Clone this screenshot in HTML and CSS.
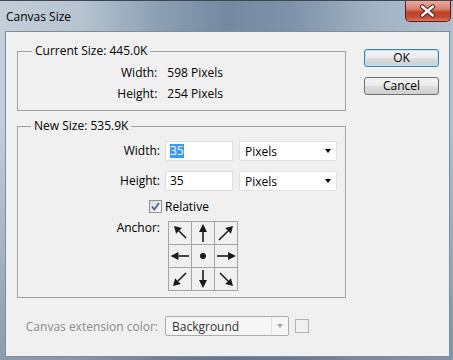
FILE: index.html
```html
<!DOCTYPE html>
<html>
<head>
<meta charset="utf-8">
<link rel="stylesheet" href="styles.css">
</head>
<body>
<div class="window">
  <div class="titlebar">
    <span class="title">Canvas Size</span>
    <div class="close">
      <svg width="46" height="21" viewBox="0 0 46 21">
        <path d="M17.5 6.5 L28.5 15.5 M28.5 6.5 L17.5 15.5" stroke="#4a1c14" stroke-width="4.6" stroke-linecap="round" fill="none"/>
        <path d="M17.5 6.5 L28.5 15.5 M28.5 6.5 L17.5 15.5" stroke="#ffffff" stroke-width="2.6" stroke-linecap="round" fill="none"/>
      </svg>
    </div>
  </div>
  <div class="client">
    <div class="main">
      <fieldset class="group current">
        <legend>Current Size: 445.0K</legend>
        <div class="info">
          <div class="info-row"><span>Width:</span><span class="val">598 Pixels</span></div>
          <div class="info-row"><span>Height:</span><span class="val">254 Pixels</span></div>
        </div>
      </fieldset>
      <fieldset class="group newsize">
        <legend>New Size: 535.9K</legend>
        <div class="form">
          <span class="lbl">Width:</span>
          <div class="input"><span class="selected">35</span></div>
          <div class="select"><span>Pixels</span><span class="caret"></span></div>

          <span class="lbl">Height:</span>
          <div class="input"><span>35</span></div>
          <div class="select"><span>Pixels</span><span class="caret"></span></div>

          <span class="checkbox">
            <svg width="13" height="13" viewBox="0 0 13 13">
              <path d="M3 6.5 L5.3 9.5 L10 3" stroke="#4b5f95" stroke-width="1.8" fill="none"/>
            </svg>
          </span>
          <span class="check-label">Relative</span>

          <span class="lbl anchor-lbl">Anchor:</span>
          <div class="anchor">
            <div class="cell"><svg viewBox="0 0 22 22"><line x1="17" y1="16" x2="10" y2="9"/><polygon points="5,4 12.8,6.1 7.1,11.8"/></svg></div>
            <div class="cell"><svg viewBox="0 0 22 22"><line x1="11" y1="20" x2="11" y2="10"/><polygon points="11,2 15,10 7,10"/></svg></div>
            <div class="cell"><svg viewBox="0 0 22 22"><line x1="4" y1="18" x2="13" y2="9"/><polygon points="18,4 15.9,11.8 10.2,6.1"/></svg></div>
            <div class="cell"><svg viewBox="0 0 22 22"><line x1="20" y1="11" x2="9.5" y2="11"/><polygon points="1.5,11 9.5,7 9.5,15"/></svg></div>
            <div class="cell"><svg viewBox="0 0 22 22"><circle cx="11" cy="11" r="3"/></svg></div>
            <div class="cell"><svg viewBox="0 0 22 22"><line x1="2" y1="11" x2="13" y2="11"/><polygon points="21,11 13,7 13,15"/></svg></div>
            <div class="cell"><svg viewBox="0 0 22 22"><line x1="17" y1="5" x2="9" y2="13"/><polygon points="4,18 11.8,15.9 6.1,10.2"/></svg></div>
            <div class="cell"><svg viewBox="0 0 22 22"><line x1="11" y1="2" x2="11" y2="12"/><polygon points="11,20 15,12 7,12"/></svg></div>
            <div class="cell"><svg viewBox="0 0 22 22"><line x1="5" y1="5" x2="13" y2="13"/><polygon points="18,18 15.9,10.2 10.2,15.9"/></svg></div>
          </div>
        </div>
      </fieldset>
      <div class="ext">
        <span class="ext-lbl">Canvas extension color:</span>
        <div class="ext-select"><span class="ext-text">Background</span><span class="ext-btn"><span class="ext-caret"></span></span></div>
        <span class="swatch"></span>
      </div>
    </div>
    <div class="buttons">
      <button class="btn ok">OK</button>
      <button class="btn">Cancel</button>
    </div>
  </div>
</div>
</body>
</html>
```

FILE: styles.css
```css
* { box-sizing: border-box; }
html, body { margin: 0; padding: 0; }
body {
  width: 453px;
  height: 360px;
  overflow: hidden;
  font-family: "Open Sans", "Noto Sans", sans-serif;
  font-size: 12px;
  color: #000;
}
.window {
  width: 453px;
  height: 360px;
  display: flex;
  flex-direction: column;
  border-top: 1px solid #3e464f;
  background:
    linear-gradient(180deg, rgba(0,0,0,0) 0, rgba(0,0,0,0) 35%, rgba(70,95,120,0.45) 100%),
    linear-gradient(90deg, #c3ced9 0%, #b6c3d0 18%, #8c9fb3 35%, #7489a1 50%, #7f93aa 65%, #a2b2c3 82%, #b0bfcd 100%);
}
.titlebar {
  height: 30px;
  display: flex;
  justify-content: space-between;
  align-items: flex-start;
  flex: none;
}
.title {
  font-size: 12px;
  line-height: 16px;
  padding: 8px 0 0 6px;
  color: #000;
}
.close {
  width: 46px;
  height: 21px;
  margin-right: 2px;
  border: 1px solid #5a2017;
  border-top: none;
  border-radius: 0 0 5px 5px;
  background: linear-gradient(180deg, #e9aa9c 0%, #d98270 40%, #c2422b 55%, #c54a32 80%, #d9775f 100%);
  display: flex;
}
.close svg { display: block; margin: -1px 0 0 -1px; }
.client {
  flex: 1;
  margin: 0 3px 3px 5px;
  border: 1px solid #7d8c9b;
  background: #f0f0f0;
  display: flex;
  align-items: flex-start;
}
.main {
  padding: 12px 0 0 11px;
  width: 340px;
  flex: none;
}
.group {
  margin: 0;
  padding: 0;
  border: 1px solid #a0a0a0;
  width: 329px;
  min-width: 0;
}
.group legend {
  padding: 0 3px;
  margin-left: 14px;
  line-height: 14px;
}
.newsize { margin-top: 8px; }
.newsize legend { margin-left: 13px; }
.info {
  padding: 8px 0 9px 0;
  width: 205px;
  display: flex;
  flex-direction: column;
  gap: 7px;
}
.info-row {
  display: flex;
  justify-content: flex-end;
  line-height: 14px;
}
.info-row .val { margin-left: 10px; }
.form {
  display: grid;
  grid-template-columns: 147px 74px 98px;
  grid-template-rows: 30px 29px 21px 70px;
  padding: 8px 0 6px 0;
}
.lbl {
  padding-right: 5px;
  text-align: right;
  line-height: 20px;
  align-self: start;
}
.input {
  width: 68px;
  height: 20px;
  background: #fff;
  border: 1px solid #dedede;
  padding: 0 0 0 4px;
  display: flex;
  align-items: center;
  line-height: 14px;
}
.selected {
  background: #3399ff;
  color: #fff;
}
.select {
  width: 98px;
  height: 20px;
  background: #fff;
  border: 1px solid #e2e2e2;
  border-radius: 2px;
  padding: 0 0 0 5px;
  display: flex;
  align-items: center;
  justify-content: space-between;
}
.caret {
  width: 0;
  height: 0;
  border-left: 3.5px solid transparent;
  border-right: 3.5px solid transparent;
  border-top: 4px solid #000;
  margin-right: 5px;
}
.checkbox {
  justify-self: end;
  margin-right: 3px;
  width: 13px;
  height: 13px;
  border: 1px solid #8e8f8f;
  background: linear-gradient(135deg, #dcdcdc, #fbfbfb);
  display: flex;
  align-items: center;
  justify-content: center;
  align-self: start;
}
.checkbox svg { display: block; margin: -1px; }
.check-label {
  grid-column: 2 / 4;
  line-height: 13px;
  align-self: start;
}
.anchor-lbl { line-height: 14px; }
.anchor {
  margin-left: 3px;
  width: 70px;
  height: 70px;
  display: grid;
  grid-template-columns: repeat(3, 23px);
  grid-template-rows: repeat(3, 23px);
  border-top: 1px solid #a4a4a4;
  border-left: 1px solid #a4a4a4;
  grid-column: 2 / 4;
}
.cell {
  border-right: 1px solid #a4a4a4;
  border-bottom: 1px solid #a4a4a4;
}
.cell svg {
  display: block;
  width: 22px;
  height: 22px;
}
.cell line { stroke: #1a1a1a; stroke-width: 1.6; }
.cell polygon, .cell circle { fill: #1a1a1a; }
.ext {
  margin-top: 18px;
  display: flex;
  align-items: center;
}
.ext-lbl {
  width: 148px;
  padding-right: 7px;
  text-align: right;
  color: #8b8b8b;
  white-space: nowrap;
}
.ext-select {
  width: 124px;
  height: 20px;
  border: 1px solid #acacac;
  border-radius: 2px;
  background: #f6f6f6;
  display: flex;
  align-items: center;
}
.ext-text {
  flex: 1;
  padding-left: 6px;
  color: #333;
}
.ext-btn {
  width: 17px;
  height: 18px;
  border-left: 1px solid #e0e0e0;
  display: flex;
  align-items: center;
  justify-content: center;
}
.ext-caret {
  width: 0;
  height: 0;
  border-left: 3.5px solid transparent;
  border-right: 3.5px solid transparent;
  border-top: 4px solid #a5a5a5;
}
.swatch {
  margin-left: 6px;
  width: 14px;
  height: 14px;
  border: 1px solid #b4b4b4;
  background: #f0f0f0;
}
.buttons {
  margin-left: 18px;
  padding-top: 17px;
  display: flex;
  flex-direction: column;
  gap: 10px;
}
.btn {
  width: 75px;
  height: 18px;
  padding: 0;
  font-family: inherit;
  font-size: 12px;
  line-height: 14px;
  color: #000;
  border: 1px solid #707070;
  border-radius: 3px;
  background: linear-gradient(180deg, #f4f4f4 0%, #ebebeb 50%, #dddddd 51%, #cfcfcf 100%);
}
.btn.ok {
  border-color: #3c7fb1;
  box-shadow: inset 0 0 0 1px #bfe3f8;
}
```
